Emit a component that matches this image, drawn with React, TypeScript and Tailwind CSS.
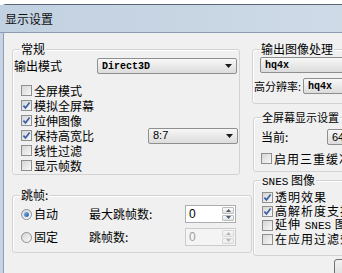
import React from "react";

const cjk = "font-['Noto_Sans_CJK_SC',sans-serif]";
const mono = "font-['Liberation_Mono',monospace]";

function Check({ checked }: { checked?: boolean }) {
  return (
    <span className="flex h-[11px] w-[11px] shrink-0 items-center justify-center border border-[#8e8f8f] bg-linear-to-br from-[#d6d6d6] to-[#f8f8f8]">
      {checked ? (
        <svg width="9" height="9" viewBox="0 0 9 9">
          <path d="M1.4 4.6L3.5 6.9L7.6 1.5" fill="none" stroke="#3a5ea6" strokeWidth="1.7" />
        </svg>
      ) : null}
    </span>
  );
}

function Radio({ on }: { on?: boolean }) {
  return (
    <span className="flex h-[11px] w-[11px] shrink-0 items-center justify-center rounded-full border border-[#8e8f8f] bg-linear-to-br from-[#d6d6d6] to-[#fafafa]">
      {on ? <span className="h-[5px] w-[5px] rounded-full bg-linear-to-br from-[#7fb2ea] to-[#1d5bb0]" /> : null}
    </span>
  );
}

function Arrow() {
  return (
    <svg width="7" height="4" viewBox="0 0 7 4" className="shrink-0">
      <path d="M0 0H7L3.5 4Z" fill="#1a1a1a" />
    </svg>
  );
}

function Combo({ value, className = "", textClass = "" }: { value: string; className?: string; textClass?: string }) {
  return (
    <div
      className={`flex h-[16px] shrink-0 items-center justify-between rounded-[2px] border border-[#8e8f8f] bg-linear-to-b from-[#f7f7f7] to-[#dcdcdc] pl-[4px] pr-[4px] ${className}`}
    >
      <span className={textClass}>{value}</span>
      <Arrow />
    </div>
  );
}

function Group({ label, className = "", children }: { label: React.ReactNode; className?: string; children?: React.ReactNode }) {
  return (
    <div className={`relative shrink-0 rounded-[3px] border border-[#d3d3d3] shadow-[inset_1px_1px_0_#ffffff] ${className}`}>
      <span className="absolute -top-[8px] left-[7px] whitespace-nowrap bg-[#f0f0f0] px-px text-[12px] leading-[14px]">{label}</span>
      {children}
    </div>
  );
}

function CheckRow({ checked, children, h = "h-[15px]" }: { checked?: boolean; children: React.ReactNode; h?: string }) {
  return (
    <div className={`flex items-center gap-[2px] ${h}`}>
      <Check checked={checked} />
      <span className="whitespace-nowrap text-[12px] leading-[14px]">{children}</span>
    </div>
  );
}

function SpinArrow({ up, color }: { up?: boolean; color: string }) {
  return (
    <svg width="5" height="3" viewBox="0 0 5 3">
      <path d={up ? "M0 3H5L2.5 0Z" : "M0 0H5L2.5 3Z"} fill={color} />
    </svg>
  );
}

function Spin({ disabled }: { disabled?: boolean }) {
  const btn = disabled
    ? "border-[#d8d8d8] from-[#f6f6f6] to-[#ececec]"
    : "border-[#bdbdbd] from-[#fafafa] to-[#e2e2e2]";
  const ac = disabled ? "#b5b5b5" : "#4d5c70";
  return (
    <div
      className={`flex h-[18px] w-[51px] shrink-0 border ${
        disabled ? "border-[#cbcbcb] bg-[#f4f4f4] text-[#a0a0a0]" : "border-[#abadb3] bg-white text-black"
      }`}
    >
      <span className="flex-1 pl-[3px] font-['Liberation_Sans',sans-serif] text-[12px] leading-[16px]">0</span>
      <div className="flex w-[14px] flex-col gap-px p-px">
        <span className={`flex flex-1 items-center justify-center rounded-[1px] border bg-linear-to-b ${btn}`}>
          <SpinArrow up color={ac} />
        </span>
        <span className={`flex flex-1 items-center justify-center rounded-[1px] border bg-linear-to-b ${btn}`}>
          <SpinArrow color={ac} />
        </span>
      </div>
    </div>
  );
}

export default function App() {
  return (
    <div className={`h-[273px] w-[342px] overflow-hidden bg-white text-black ${cjk}`}>
      <div className="mt-[4px] flex h-[269px] w-[440px] flex-col rounded-tl-[6px] border-t border-[#5b6675] bg-[#c6d4e3]">
        <div className="flex h-[28px] shrink-0 items-center border-b border-[#8e9db1] bg-linear-to-r from-[#c2d1e1] via-[#c9d6e4] to-[#d3dee9] pl-[5px] text-[12px] leading-[14px] text-[#111]">
          显示设置
        </div>
        <div className="flex flex-1">
          <div className="w-[4px] shrink-0 border-r border-[#8e9db1] bg-[#c6d4e3]" />
          <div className="flex flex-1 bg-[#f0f0f0] pl-[8px] pt-[16px]">
            {/* left column */}
            <div className="flex w-[240px] shrink-0 flex-col">
              <Group label="常规" className="h-[126px] w-[228px]">
                <div className="mt-[8px] flex h-[16px] items-center">
                  <span className="w-[84px] pl-px text-[12px] leading-[14px]">输出模式</span>
                  <Combo value="Direct3D" className="w-[140px]" textClass={`${mono} text-[10px] font-bold`} />
                </div>
                <div className="mt-[9px] flex flex-col pl-[8px]">
                  <CheckRow>全屏模式</CheckRow>
                  <CheckRow checked>模拟全屏幕</CheckRow>
                  <CheckRow checked>拉伸图像</CheckRow>
                  <div className="flex h-[15px] items-center gap-[2px]">
                    <Check checked />
                    <span className="w-[112px] text-[12px] leading-[14px]">保持高宽比</span>
                    <Combo value="8:7" className="w-[90px]" textClass="font-['Liberation_Sans',sans-serif] text-[11px]" />
                  </div>
                  <CheckRow>线性过滤</CheckRow>
                  <CheckRow>显示帧数</CheckRow>
                </div>
              </Group>

              <Group label="跳帧:" className="mt-[20px] h-[58px] w-[240px]">
                <div className="mt-[9px] flex h-[18px] items-center pl-[8px]">
                  <div className="flex w-[68px] items-center gap-[2px]">
                    <Radio on />
                    <span className="text-[12px] leading-[14px]">自动</span>
                  </div>
                  <span className="w-[96px] text-[12px] leading-[14px]">最大跳帧数:</span>
                  <Spin />
                </div>
                <div className="mt-[5px] flex h-[18px] items-center pl-[8px]">
                  <div className="flex w-[68px] items-center gap-[2px]">
                    <Radio />
                    <span className="text-[12px] leading-[14px]">固定</span>
                  </div>
                  <span className="w-[96px] text-[12px] leading-[14px]">跳帧数:</span>
                  <Spin disabled />
                </div>
              </Group>
            </div>

            {/* right column */}
            <div className="flex w-[170px] shrink-0 flex-col">
              <Group label="输出图像处理" className="h-[55px] w-[160px]">
                <Combo value="hq4x" className="ml-[7px] mt-[7px] w-[140px]" textClass={`${mono} text-[10px] font-bold`} />
                <div className="mt-[5px] flex h-[16px] items-center">
                  <span className="w-[50px] whitespace-nowrap pl-px text-[11px] leading-[14px]">高分辨率:</span>
                  <Combo value="hq4x" className="w-[100px]" textClass={`${mono} text-[10px] font-bold`} />
                </div>
              </Group>

              <Group
                label={<span className="text-[11px]">全屏幕显示设置</span>}
                className="ml-px mt-[13px] h-[55px] w-[160px]"
              >
                <div className="mt-[11px] flex h-[16px] items-center pl-[7px]">
                  <span className="w-[66px] text-[12px] leading-[14px]">当前:</span>
                  <Combo value="640x480" className="w-[80px]" textClass="font-['Liberation_Sans',sans-serif] text-[11px]" />
                </div>
                <div className="mt-[6px] pl-[7px]">
                  <CheckRow>
                    <span className="tracking-[1px]">启用三重缓冲</span>
                  </CheckRow>
                </div>
              </Group>

              <Group
                label={
                  <>
                    <span className={`${mono} text-[11px]`}>SNES</span> 图像
                  </>
                }
                className="ml-px mt-[8px] h-[76px] w-[160px]"
              >
                <div className="mt-[9px] flex flex-col pl-[8px]">
                  <CheckRow checked h="h-[14px]">
                    <span className="tracking-[1px]">透明效果</span>
                  </CheckRow>
                  <CheckRow checked h="h-[14px]">
                    <span className="tracking-[1px]">高解析度支持</span>
                  </CheckRow>
                  <CheckRow h="h-[14px]">
                    <span className="tracking-[1px]">
                      延伸 <span className={`${mono} text-[11px] tracking-normal`}>SNES</span> 图像
                    </span>
                  </CheckRow>
                  <CheckRow h="h-[14px]">
                    <span className="tracking-[1px]">在应用过滤效果</span>
                  </CheckRow>
                </div>
              </Group>

              <div className="ml-[82px] mt-[3px] h-[22px] w-[75px] rounded-[3px] border border-[#707070] bg-linear-to-b from-[#f2f2f2] to-[#d8d8d8]" />
            </div>
          </div>
        </div>
      </div>
    </div>
  );
}
